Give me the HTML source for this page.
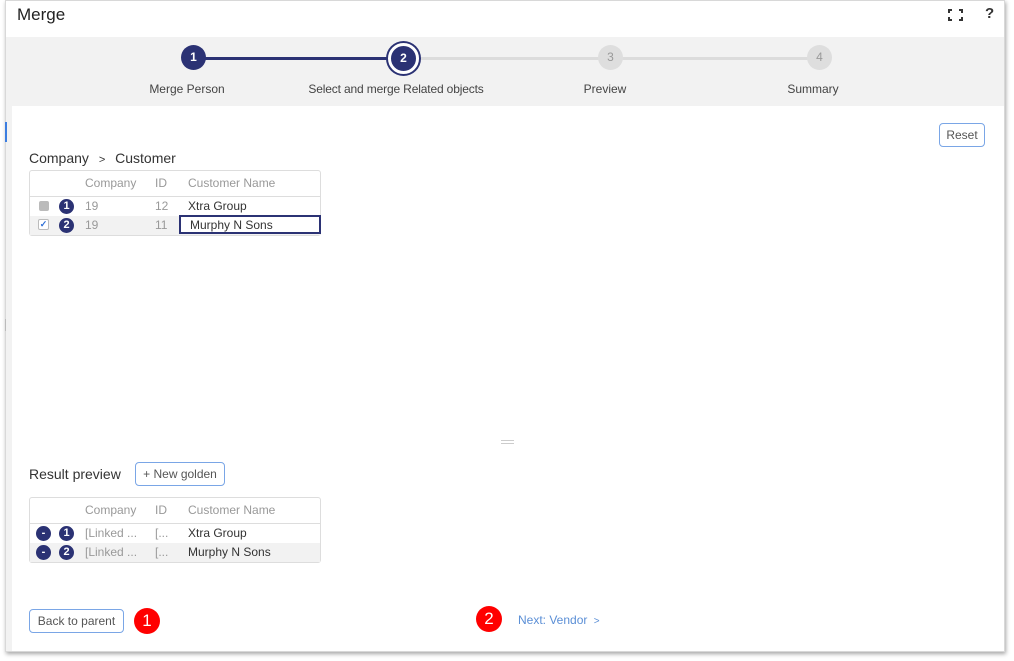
<!DOCTYPE html>
<html><head><style>
*{box-sizing:border-box;margin:0;padding:0}
body{width:1014px;height:661px;background:#fff;font-family:"Liberation Sans",sans-serif;position:relative;overflow:hidden;color:#333}
.a{position:absolute}
.win{left:5px;top:0;width:1000px;height:652px;background:#fff;border:1px solid #d8d8d8;box-shadow:1px 2px 4px rgba(0,0,0,.35)}
.gray{left:6px;top:37px;width:998px;height:614px;background:#f2f2f2}
.panel{left:12px;top:106px;width:992px;height:545px;background:#fff}
.c{border-radius:50%;width:25px;height:25px;text-align:center;line-height:25px;font-size:12px}
.dk{background:#2b3274;color:#fff;font-weight:bold}
.lt{background:#dedede;color:#999}
.lbl{font-size:12px;color:#444;top:82px;transform:translateX(-50%);white-space:nowrap}
.btn{border:1px solid #7aa6e6;border-radius:4px;font-size:12px;color:#555;text-align:center;background:#fff}
.tbl{border:1px solid #ddd;border-radius:3px;width:292px;font-size:12px}
.row{position:relative;height:19px}
.row span{position:absolute;top:2px}
.h{color:#999}
.n{width:15px;height:15px;border-radius:50%;background:#2b3274;color:#fff;font-size:11px;font-weight:bold;text-align:center;line-height:15px;top:2px!important}
.g{color:#999}
.red{width:26px;height:26px;border-radius:50%;background:#f00;color:#fff;font-size:17px;text-align:center;line-height:26px}
</style></head><body>
<div class="a win"></div>
<div class="a gray"></div>
<div class="a panel"></div>
<div class="a" style="left:5px;top:122px;width:2px;height:20px;background:#3b7de0"></div>
<div class="a" style="left:5px;top:319px;width:1px;height:12px;background:#bbb"></div>
<div class="a" style="left:17px;top:5px;font-size:17px;color:#222">Merge</div>
<svg class="a" style="left:948px;top:9px" width="15" height="12" viewBox="0 0 15 12"><path d="M1 4V1H4M11 1H14V4M14 8V11H11M4 11H1V8" fill="none" stroke="#333" stroke-width="2"/></svg>
<div class="a" style="left:985px;top:5px;font-size:15px;font-weight:bold;color:#333">?</div>
<div class="a" style="left:194px;top:57px;width:209px;height:3px;background:#2b3274"></div>
<div class="a" style="left:403px;top:57px;width:417px;height:3px;background:#dcdcdc"></div>
<div class="a c dk" style="left:181px;top:45px">1</div>
<div class="a c dk" style="left:388px;top:43px;width:31px;height:31px;line-height:25px;border:3px solid #fff;box-shadow:0 0 0 2px #2b3274">2</div>
<div class="a c lt" style="left:598px;top:45px">3</div>
<div class="a c lt" style="left:807px;top:45px">4</div>
<div class="a lbl" style="left:187px">Merge Person</div>
<div class="a lbl" style="left:396px;letter-spacing:-0.15px">Select and merge Related objects</div>
<div class="a lbl" style="left:605px">Preview</div>
<div class="a lbl" style="left:813px">Summary</div>
<div class="a btn" style="left:939px;top:123px;width:46px;height:24px;line-height:22px">Reset</div>
<div class="a" style="left:29px;top:150px;font-size:14px;color:#333">Company <span style="font-size:11px;margin:0 6px">&gt;</span> Customer</div>
<div class="a tbl" style="left:29px;top:170px">
 <div class="row" style="height:26px;border-bottom:1px solid #ddd"><span class="h" style="left:55px;top:5px">Company</span><span class="h" style="left:125px;top:5px">ID</span><span class="h" style="left:158px;top:5px">Customer Name</span></div>
 <div class="row"><span style="left:9px;top:4px;width:10px;height:10px;background:#bbb;border-radius:2px"></span><span class="n" style="left:29px">1</span><span class="g" style="left:55px">19</span><span class="g" style="left:125px">12</span><span style="left:158px">Xtra Group</span></div>
 <div class="row" style="background:#f2f2f2"><span style="left:8px;top:3px;width:11px;height:11px;border:1px solid #bbb;border-radius:2px;background:#fff;color:#2f6fd6;font-size:9px;line-height:9px;text-align:center;font-weight:bold">✓</span><span class="n" style="left:29px">2</span><span class="g" style="left:55px">19</span><span class="g" style="left:125px">11</span><span style="left:149px;top:-1px;width:142px;height:19px;border:2px solid #2b3274;background:#fff;padding:1px 0 0 9px">Murphy N Sons</span></div>
</div>
<div class="a" style="left:501px;top:440px;width:13px;height:4px;border-top:1px solid #ccc;border-bottom:1px solid #ccc"></div>
<div class="a" style="left:29px;top:466px;font-size:14px">Result preview</div>
<div class="a btn" style="left:135px;top:462px;width:90px;height:24px;line-height:22px">+ New golden</div>
<div class="a tbl" style="left:29px;top:497px">
 <div class="row" style="height:26px;border-bottom:1px solid #ddd"><span class="h" style="left:55px;top:5px">Company</span><span class="h" style="left:125px;top:5px">ID</span><span class="h" style="left:158px;top:5px">Customer Name</span></div>
 <div class="row"><span class="n" style="left:6px">-</span><span class="n" style="left:29px">1</span><span class="g" style="left:55px">[Linked ...</span><span class="g" style="left:125px">[...</span><span style="left:158px">Xtra Group</span></div>
 <div class="row" style="background:#f2f2f2"><span class="n" style="left:6px">-</span><span class="n" style="left:29px">2</span><span class="g" style="left:55px">[Linked ...</span><span class="g" style="left:125px">[...</span><span style="left:158px">Murphy N Sons</span></div>
</div>
<div class="a btn" style="left:29px;top:609px;width:95px;height:24px;line-height:22px">Back to parent</div>
<div class="a red" style="left:134px;top:608px">1</div>
<div class="a red" style="left:476px;top:606px">2</div>
<div class="a" style="left:518px;top:613px;font-size:12px;color:#5b8fd6">Next: Vendor <span style="font-size:10px;margin-left:3px">&gt;</span></div>
</body></html>
